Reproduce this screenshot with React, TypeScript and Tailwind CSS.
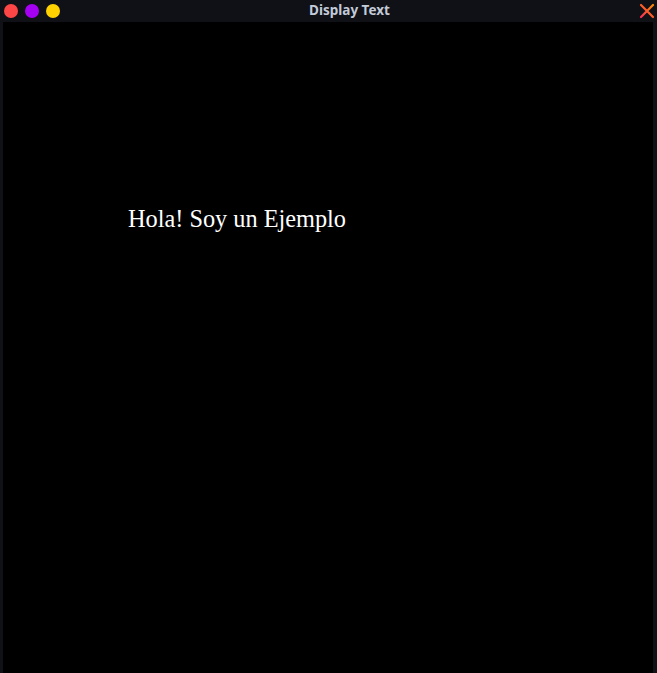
import React from "react";

const Dot = ({ className }: { className: string }) => (
  <span className={`block w-[14px] h-[14px] rounded-full ${className}`} />
);

const CloseIcon = () => (
  <svg width="16" height="16" viewBox="0 0 16 16">
    <defs>
      <linearGradient id="xg" x1="0" y1="1" x2="1" y2="0">
        <stop offset="0" stopColor="#ff2d55" />
        <stop offset="1" stopColor="#ff8a00" />
      </linearGradient>
    </defs>
    <path d="M2 2 L14 14 M14 2 L2 14" stroke="url(#xg)" strokeWidth="2.2" strokeLinecap="round" />
  </svg>
);

const App = () => {
  return (
    <div className="w-[657px] h-[673px] bg-[#0f1117] flex flex-col overflow-hidden">
      <header className="h-[22px] flex items-center">
        <div className="flex items-center gap-[7px] pl-[4px] w-[60px]">
          <Dot className="bg-[#ff4646]" />
          <Dot className="bg-[#a600f2]" />
          <Dot className="bg-[#ffd200]" />
        </div>
        <h1 className="flex-1 text-center text-[13.5px] font-bold text-[#c3cad8] font-['Noto_Sans',sans-serif] leading-none">
          Display Text
        </h1>
        <div className="w-[18px] flex items-center">
          <CloseIcon />
        </div>
      </header>
      <main className="flex-1 bg-black ml-[3px] mr-[4px] pt-[185px] pl-[125px]">
        <p className="text-white text-[24.3px] leading-none font-['Liberation_Serif',serif]">
          Hola! Soy un Ejemplo
        </p>
      </main>
    </div>
  );
};

export default App;
